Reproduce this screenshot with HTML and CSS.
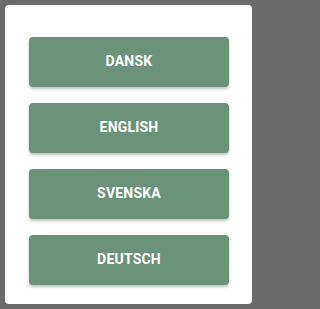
FILE: index.html
```html
<!DOCTYPE html>
<html>
<head>
<meta charset="utf-8">
<link rel="stylesheet" href="styles.css">
</head>
<body>
<div class="dialog">
  <button class="lang">DANSK</button>
  <button class="lang">ENGLISH</button>
  <button class="lang">SVENSKA</button>
  <button class="lang">DEUTSCH</button>
</div>
</body>
</html>
```
FILE: styles.css
```css
html, body {
  margin: 0;
  padding: 0;
  background: #6b6b6b;
  height: 309px;
  overflow: hidden;
}
body {
  padding: 5px 5px 0 5px;
  box-sizing: border-box;
}
.dialog {
  width: 247px;
  height: 299px;
  background: #ffffff;
  border-radius: 4px;
  box-sizing: border-box;
  padding: 32px 0 0 24px;
  display: flex;
  flex-direction: column;
  gap: 16px;
}
.lang {
  width: 200px;
  height: 50px;
  border: none;
  border-radius: 4px;
  background: #6a937a;
  color: #ffffff;
  font-family: Roboto, "Liberation Sans", sans-serif;
  font-weight: 700;
  font-size: 14px;
  letter-spacing: 0.2px;
  box-shadow: 0 2px 3px rgba(0,0,0,0.25);
  padding: 0 0 3px 0;
}
```
